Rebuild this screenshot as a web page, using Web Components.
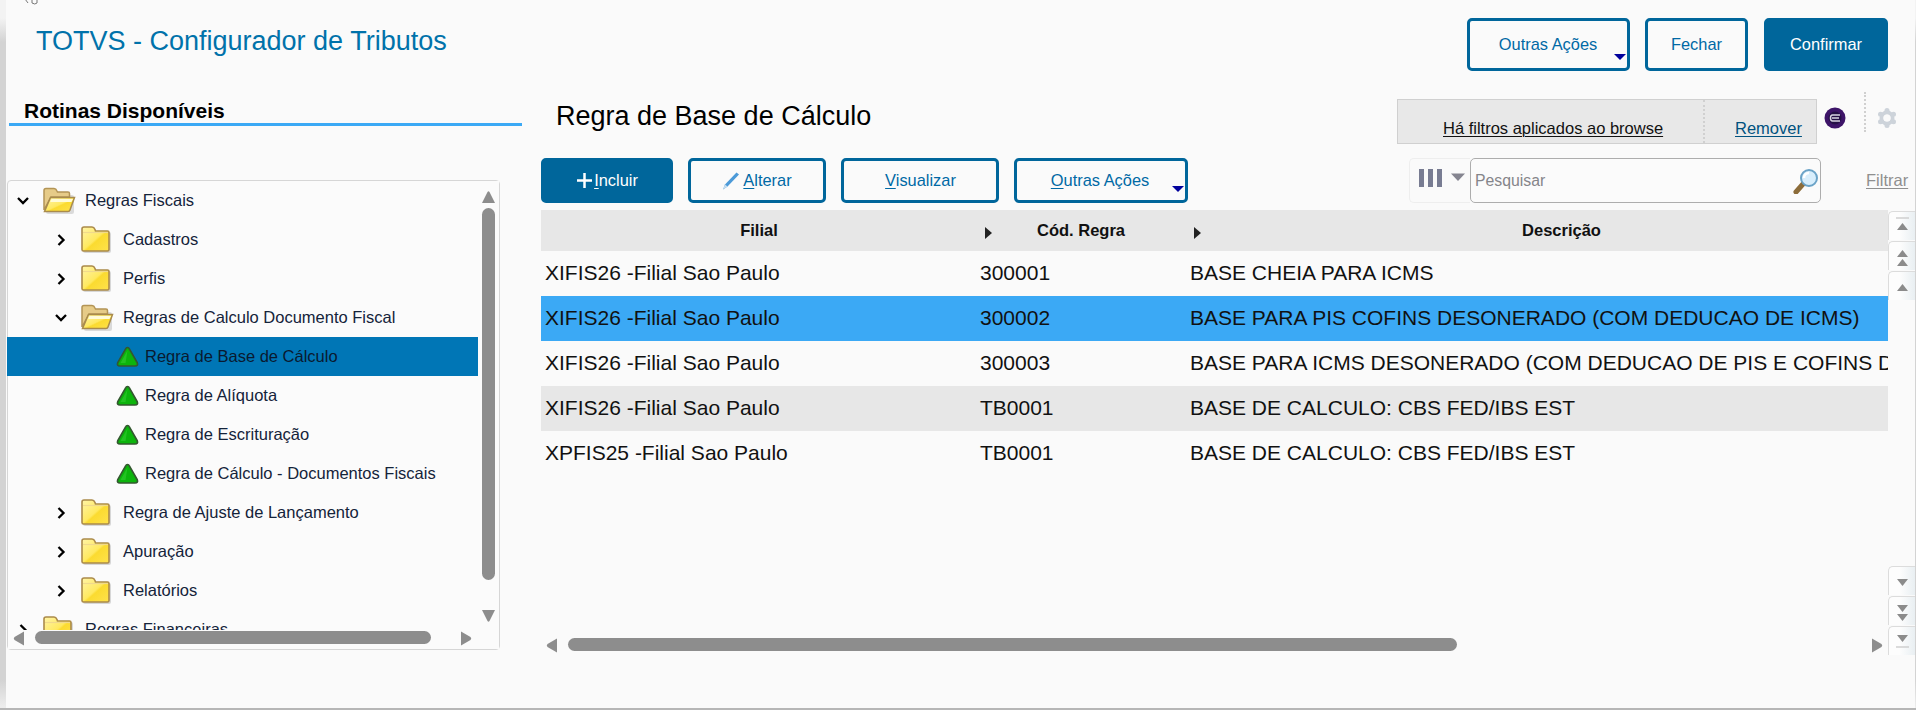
<!DOCTYPE html>
<html lang="pt"><head><meta charset="utf-8"><title>TOTVS</title>
<style>
html,body{margin:0;padding:0;height:710px;overflow:hidden}
html{background:linear-gradient(#b6b6b6,#b6b6b6) left bottom/100% 2px no-repeat,linear-gradient(#f3f3f3 0,#f3f3f3 18px,#d3d3d3 42px,#d3d3d3 680px,#ececec 706px)}
body{font-family:"Liberation Sans",Arial,sans-serif}
</style></head><body>
<app-shell></app-shell>
<script>
const def=(name,html)=>{customElements.define(name,class extends HTMLElement{
  constructor(){super();this.attachShadow({mode:'open'}).innerHTML=typeof html==='function'?html(this):html;}
});};

const fy=`<defs><linearGradient id="fy" x1="0" y1="0" x2="1" y2="1"><stop offset="0" stop-color="#fff4a8"/><stop offset=".5" stop-color="#ffe960"/><stop offset=".56" stop-color="#fbdb30"/><stop offset="1" stop-color="#ffe24c"/></linearGradient></defs>`;
const closedFolder=`<svg width="33" height="28" viewBox="0 0 33 28">${fy}<rect x="2" y="6" width="28" height="21" rx="2" fill="#000" opacity=".14"/><path d="M1 7V3Q1 1 3 1H11Q13 1 14 3.500L14.500 5H26.500Q28 5 28 6.500V23.500Q28 25 26.500 25H2.500Q1 25 1 23.500Z" fill="url(#fy)" stroke="#ab8a4a" stroke-width="1.600"/><path d="M2 6.500H27" stroke="#f0d98c" stroke-width="1.200"/></svg>`;
const openFolder=`<svg width="33" height="28" viewBox="0 0 33 28">${fy}<rect x="3" y="8" width="28" height="19" rx="2" fill="#000" opacity=".13"/><path d="M1 23V3.500Q1 1.500 3 1.500H11Q13 1.500 14 4L14.500 5H25Q26.500 5 26.500 6.500V10H8Z" fill="#e6cb88" stroke="#b39455" stroke-width="1.500"/><path d="M1.500 24.500 7.500 10.500H31.500L27 23Q26.500 24.500 25 24.500Z" fill="url(#fy)" stroke="#a98b4c" stroke-width="1.500"/><path d="M8.500 12H30L28.500 15H7.200Z" fill="#fffbd8"/></svg>`;
const tri=`<svg width="23" height="22" viewBox="0 0 23 22"><path d="M11.500 1.500Q12.800 1.500 13.500 3.200L21.200 16.500Q22.500 20 19 20H4Q.5 20 1.800 16.500L9.500 3.200Q10.200 1.500 11.500 1.500Z" fill="#0cb40c" stroke="#33582f" stroke-width="1.700"/><path d="M11.500 4.500 4.500 17H9.500Z" fill="#35cf35" opacity=".55"/></svg>`;

def('t-btn',`<style>
:host{display:inline-flex;box-sizing:border-box;height:var(--h,53px);border-radius:5px;align-items:center;justify-content:center;position:relative;
 border:3px solid #00669b;background:#fafafa;color:#0069a5;font:16.400px "Liberation Sans",sans-serif;cursor:pointer}
:host([solid]){background:#00669b;color:#fff}
:host([menu])::after{content:"";position:absolute;right:1px;bottom:8px;border-style:solid;border-color:#00009c transparent transparent;border-width:6px 6px 0}
</style><slot></slot>`);

def('title-bar',`<style>
:host{display:flex;align-items:flex-start;height:92px;box-sizing:border-box}
h1{margin:0;padding:26px 0 0 30px;font:400 27px/30px "Liberation Sans",sans-serif;color:#0072aa;flex:1}
.b{display:flex;gap:15px;padding:18px 27px 0 0}
</style><h1>TOTVS - Configurador de Tributos</h1>
<div class="b"><t-btn menu style="width:163px;padding-right:1px">Outras Ações</t-btn>
<t-btn style="width:103px">Fechar</t-btn>
<t-btn solid style="width:124px;margin-left:1px">Confirmar</t-btn></div>`);

def('tree-row',h=>{
 const lv=h.getAttribute('level')||'1', st=h.getAttribute('state')||'closed';
 const pad={1:8,2:46,3:108}[lv];
 const arrow=st==='leaf'?'':(st==='open'
   ?`<svg width="14" height="10" viewBox="0 0 14 10"><path d="M2 2 7 7 12 2" fill="none" stroke="#000" stroke-width="2.300"/></svg>`
   :`<svg width="14" height="14" viewBox="0 0 14 14"><path d="M4.500 2 9.500 7 4.500 12" fill="none" stroke="#000" stroke-width="2.300"/></svg>`);
 const icon=st==='leaf'?tri:(st==='open'?openFolder:closedFolder);
 return `<style>
:host{display:flex;height:39px;align-items:center;box-sizing:border-box;padding-left:${pad}px;font:16.500px "Liberation Sans",sans-serif;color:#14233a;white-space:nowrap}
:host([selected]){background:#0076b6;width:471px;margin-left:-1px;padding-left:${pad+1}px;color:#0a1a30}
.a{width:14px;display:flex;justify-content:center}
.i{display:flex;margin-left:${st==='leaf'?0:13}px;margin-right:${st==='leaf'?6:9}px}
</style>${st==='leaf'?'':`<span class="a">${arrow}</span>`}<span class="i">${icon}</span><slot></slot>`;
});

def('s-arrow',h=>{
 const d=h.getAttribute('dir');
 const p={up:'M1 13 6.500 2Q7.500 .5 8.500 2L14 13Z',down:'M1 1H14L8.500 12Q7.500 13.500 6.500 12Z',left:'M11 .5V14.500L1.500 9Q0 7.500 1.500 6Z',right:'M1 .5V14.500L10.500 9Q12 7.500 10.500 6Z'}[d];
 return `<style>:host{display:block;position:absolute;line-height:0}</style><svg width="15" height="15" viewBox="0 0 15 15"><path d="${p}" fill="#8d8d8d"/></svg>`;
});

def('tree-panel',`<style>
:host{display:block;position:relative;margin:54px 0 0 -2px;width:493px;height:470px;box-sizing:border-box;border:1px solid #d6d6d6;border-radius:4px;background:#fbfbfb}
.list{height:449px;overflow:hidden;margin-left:-1px;padding-left:1px;position:relative}
.thumb{position:absolute;background:#8d8d8d;border-radius:7px}
s-arrow{position:absolute}
</style>
<div class="list"><slot></slot></div>
<div style="position:absolute;right:0;top:0;bottom:0;width:21px;background:#fbfbfb"></div>
<div style="position:absolute;left:0;right:0;bottom:0;height:19px;background:#fbfbfb"></div>
<s-arrow dir="up" style="left:473px;top:9px"></s-arrow>
<div class="thumb" style="left:474px;top:27px;width:13px;height:372px"></div>
<s-arrow dir="down" style="left:473px;top:428px"></s-arrow>
<s-arrow dir="left" style="left:5px;top:450px"></s-arrow>
<div class="thumb" style="left:27px;top:450px;width:396px;height:13px"></div>
<s-arrow dir="right" style="left:452px;top:450px"></s-arrow>`);

def('side-bar',`<style>
:host{display:block;width:513px;flex:none;margin-left:3px}
.h{height:34px;box-sizing:border-box;border-bottom:3px solid #3ba9f5;font:700 21px/37px "Liberation Sans",sans-serif;color:#000;padding-left:15px;white-space:nowrap}
</style><div class="h">Rotinas Disponíveis</div><tree-panel><slot></slot></tree-panel>`);

def('filter-bar',`<style>
:host{display:flex;align-items:flex-start;height:66px;box-sizing:border-box;padding-top:7px}
h2{margin:0;flex:1;padding:0 0 0 15px;font:400 27px/34px "Liberation Sans",sans-serif;color:#000;white-space:nowrap}
.box{display:flex;width:420px;height:45px;box-sizing:border-box;border:1px solid #d0d0d0;background:#e8e8e8;font:16.500px "Liberation Sans",sans-serif}
.l{width:307px;box-sizing:border-box;padding:0 0 5px 45px;color:#111;border-right:2px dotted #d0d0d0;display:flex;align-items:flex-end;white-space:nowrap}
.r{padding:0 0 5px 30px;display:flex;align-items:flex-end}
u{text-decoration-thickness:1px;text-underline-offset:2px}
.r u{color:#00527f}
.ic{width:98px;height:46px;display:flex;align-items:center;padding-left:7px;box-sizing:border-box;margin-top:-4px}
.sep{height:40px;border-left:2px dotted #d0d0d0;margin:-12px 11px 0 18px}
</style>
<h2>Regra de Base de Cálculo</h2>
<div class="box"><div class="l"><u>Há filtros aplicados ao browse</u></div><div class="r"><u>Remover</u></div></div>
<div class="ic">
<svg width="22" height="22" viewBox="0 0 22 22"><circle cx="11" cy="11" r="10.500" fill="#3d1468"/><circle cx="11" cy="11" r="6.500" fill="#251046"/><path d="M16 8H8.500Q6.500 8 6.500 11T8.500 14H16" fill="none" stroke="#d8d4e2" stroke-width="1.500"/><path d="M8 11H15" stroke="#d8d4e2" stroke-width="1.500"/></svg>
<span class="sep"></span>
<svg width="20" height="20" viewBox="0 0 20 20"><circle cx="10" cy="10" r="5.500" fill="none" stroke="#cdd3da" stroke-width="4"/><g fill="#cdd3da"><circle cx="10" cy="2.500" r="2.500"/><circle cx="10" cy="17.500" r="2.500"/><circle cx="3.500" cy="6.200" r="2.500"/><circle cx="16.500" cy="6.200" r="2.500"/><circle cx="3.500" cy="13.800" r="2.500"/><circle cx="16.500" cy="13.800" r="2.500"/></g><circle cx="10" cy="10" r="3.600" fill="#fafafa"/></svg>
</div>`);

def('tool-bar',`<style>
:host{display:flex;height:52px;align-items:flex-start;--h:45px;font:16.500px "Liberation Sans",sans-serif}
.btns{display:flex;gap:15px;flex:none}
u{text-decoration-thickness:1px;text-underline-offset:2px}
.sp{flex:1}
.cols{width:61px;height:45px;box-sizing:border-box;border:1px solid #eeeeee;border-right:0;border-radius:5px 0 0 5px;display:flex;padding:9px 0 0 9px;gap:9px}
.in{width:351px;height:45px;box-sizing:border-box;border:1px solid #adadad;border-radius:5px;display:flex;align-items:center;justify-content:space-between;padding:0 1px 0 4px;color:#85858a;font-size:15.800px;background:#fbfbfb}
.f{width:94px;box-sizing:border-box;padding-left:45px;color:#8f8f8f;font-size:16.500px;line-height:45px}
</style>
<div class="btns">
<t-btn solid style="width:132px"><svg width="17" height="17" viewBox="0 0 17 17" style="margin-right:1px"><path d="M8.500 1V16M1 8.500H16" stroke="#fff" stroke-width="2.500"/></svg><span><u>I</u>ncluir</span></t-btn>
<t-btn style="width:138px"><svg width="18" height="18" viewBox="0 0 18 18" style="margin-right:3px"><path d="M1 17.500 3 12.500 14.500 .5 17 2.500 5.500 14.500Z" fill="#4c9ad8"/><path d="M1 17.500 3 12.500 5.500 14.500Z" fill="#c4ddf0"/></svg><span><u>A</u>lterar</span></t-btn>
<t-btn style="width:158px;padding-left:1px"><span><u>V</u>isualizar</span></t-btn>
<t-btn menu style="width:174px;padding-right:2px"><span><u>O</u>utras Ações</span></t-btn>
</div>
<div class="sp"></div>
<div class="cols"><svg width="24" height="20" viewBox="0 0 24 20"><path d="M0 1H5V19H0ZM9 1H14V19H9ZM18 1H23V19H18Z" fill="#787c92"/></svg><svg width="14" height="10" viewBox="0 0 14 10" style="margin:5px 0 0 -1px"><path d="M0 .5H14L7 8Z" fill="#858590"/></svg></div>
<div class="in"><span>Pesquisar</span>
<svg width="26" height="26" viewBox="0 0 26 26"><path d="M3 24 10 16" stroke="#8c6c3a" stroke-width="5" stroke-linecap="round"/><circle cx="16" cy="10" r="8" fill="#d8eefc" stroke="#6ba3c7" stroke-width="2"/><path d="M11 10a5 5 0 0 1 5-5" stroke="#fff" stroke-width="2.500" fill="none"/></svg></div>
<div class="f"><u>Filtrar</u></div>`);

def('grid-head',`<style>
:host{display:grid;grid-template-columns:436px 208px minmax(0,1fr);height:41px;background:#e7e7e7;font:700 16.500px "Liberation Sans",sans-serif;color:#111}
div{display:flex;align-items:center;justify-content:center;position:relative;box-sizing:border-box}
i{position:absolute;left:8px;top:17px;border-left:7px solid #222;border-top:6px solid transparent;border-bottom:6px solid transparent}
</style><div>Filial</div><div><i></i>Cód. Regra</div><div style="padding-left:50px"><i style="left:9px"></i>Descrição</div>`);

def('grid-row',`<style>
:host{display:grid;grid-template-columns:436px 213px minmax(0,1fr);height:45px;align-items:center;font:21px "Liberation Sans",sans-serif;color:#111;white-space:nowrap;overflow:hidden}
:host([sel]){background:#3ba9f5}:host([alt]){background:#e7e7e7}
span{overflow:hidden;display:block;padding-left:4px;padding-bottom:2px}
</style><span><slot name="a"></slot></span><span style="padding-left:3px"><slot name="b"></slot></span><span style="padding-left:0"><slot name="c"></slot></span>`);

def('page-btn',h=>{
 const k=h.getAttribute('kind');
 const up='M0 8 5.500 1 11 8Z',dn='M0 1H11L5.500 8Z';
 const c='#8b8b8b';
 const g={first:`<path d="M-1 -1H12" stroke="#cfcfcf" stroke-width="1.500"/><path d="${up}" fill="${c}" transform="translate(0,3)"/>`,
  dbl:`<path d="${up}" fill="${c}"/><path d="${up}" fill="${c}" transform="translate(0,9)"/>`,
  one:`<path d="${up}" fill="${c}" transform="translate(0,4)"/>`,
  one2:`<path d="${dn}" fill="${c}" transform="translate(0,4)"/>`,
  dbl2:`<path d="${dn}" fill="${c}"/><path d="${dn}" fill="${c}" transform="translate(0,9)"/>`,
  last:`<path d="${dn}" fill="${c}"/><path d="M-1 13H12" stroke="#cfcfcf" stroke-width="1.500"/>`}[k];
 return `<style>:host{display:flex;width:27px;height:29px;box-sizing:border-box;border:1px solid #dcdcdc;border-right:0;border-bottom:0;border-radius:5px 0 0 0;align-items:center;justify-content:center;background:linear-gradient(90deg,#fdfdfd 40%,#e9eff2)}svg{overflow:visible}</style><svg width="11" height="16" viewBox="0 -1 11 16">${g}</svg>`;
});

def('side-pager',`<style>
:host{display:flex;flex-direction:column;justify-content:space-between;width:27px;flex:none;height:444px;margin-top:1px}
.g{display:flex;flex-direction:column;gap:1px}
</style><div class="g"><page-btn kind="first"></page-btn><page-btn kind="dbl"></page-btn><page-btn kind="one"></page-btn></div>
<div class="g"><page-btn kind="one2"></page-btn><page-btn kind="dbl2"></page-btn><page-btn kind="last"></page-btn></div>`);

def('data-grid',`<style>
:host{display:flex;height:446px}
.t{position:relative;width:1347px;flex:none}
.thumb{position:absolute;background:#8d8d8d;border-radius:7px;left:27px;top:428px;width:889px;height:13px}
s-arrow{position:absolute}
</style><div class="t"><slot></slot>
<s-arrow dir="left" style="left:5px;top:428px"></s-arrow><div class="thumb"></div><s-arrow dir="right" style="left:1330px;top:428px"></s-arrow></div>
<side-pager></side-pager>`);

def('main-area',`<style>
:host{display:block;flex:1;min-width:0;margin-left:19px}
</style><slot></slot>`);

def('app-shell',`<style>
:host{display:block;box-sizing:border-box;margin-left:6px;width:1909px;height:708px;background:#fafafa;overflow:hidden;position:relative}
.b{display:flex;align-items:flex-start}
.cursor{position:absolute;left:18px;top:-1px}
</style>
<svg class="cursor" width="14" height="7" viewBox="0 0 14 7"><path d="M1 0 4 4M8 0V4Q11 6 13 4V0" fill="none" stroke="#777" stroke-width="1"/></svg>
<title-bar></title-bar>
<div class="b">
<side-bar>
<tree-row level="1" state="open">Regras Fiscais</tree-row>
<tree-row level="2">Cadastros</tree-row>
<tree-row level="2">Perfis</tree-row>
<tree-row level="2" state="open">Regras de Calculo Documento Fiscal</tree-row>
<tree-row level="3" state="leaf" selected>Regra de Base de Cálculo</tree-row>
<tree-row level="3" state="leaf">Regra de Alíquota</tree-row>
<tree-row level="3" state="leaf">Regra de Escrituração</tree-row>
<tree-row level="3" state="leaf">Regra de Cálculo - Documentos Fiscais</tree-row>
<tree-row level="2">Regra de Ajuste de Lançamento</tree-row>
<tree-row level="2">Apuração</tree-row>
<tree-row level="2">Relatórios</tree-row>
<tree-row level="1">Regras Financeiras</tree-row>
</side-bar>
<main-area>
<filter-bar></filter-bar>
<tool-bar></tool-bar>
<data-grid>
<grid-head></grid-head>
<grid-row><span slot="a">XIFIS26 -Filial Sao Paulo</span><span slot="b">300001</span><span slot="c">BASE CHEIA PARA ICMS</span></grid-row>
<grid-row sel><span slot="a">XIFIS26 -Filial Sao Paulo</span><span slot="b">300002</span><span slot="c">BASE PARA PIS COFINS DESONERADO (COM DEDUCAO DE ICMS)</span></grid-row>
<grid-row><span slot="a">XIFIS26 -Filial Sao Paulo</span><span slot="b">300003</span><span slot="c">BASE PARA ICMS DESONERADO (COM DEDUCAO DE PIS E COFINS D</span></grid-row>
<grid-row alt><span slot="a">XIFIS26 -Filial Sao Paulo</span><span slot="b">TB0001</span><span slot="c">BASE DE CALCULO: CBS FED/IBS EST</span></grid-row>
<grid-row><span slot="a">XPFIS25 -Filial Sao Paulo</span><span slot="b">TB0001</span><span slot="c">BASE DE CALCULO: CBS FED/IBS EST</span></grid-row>
</data-grid>
</main-area>
</div>`);
</script>
</body></html>
